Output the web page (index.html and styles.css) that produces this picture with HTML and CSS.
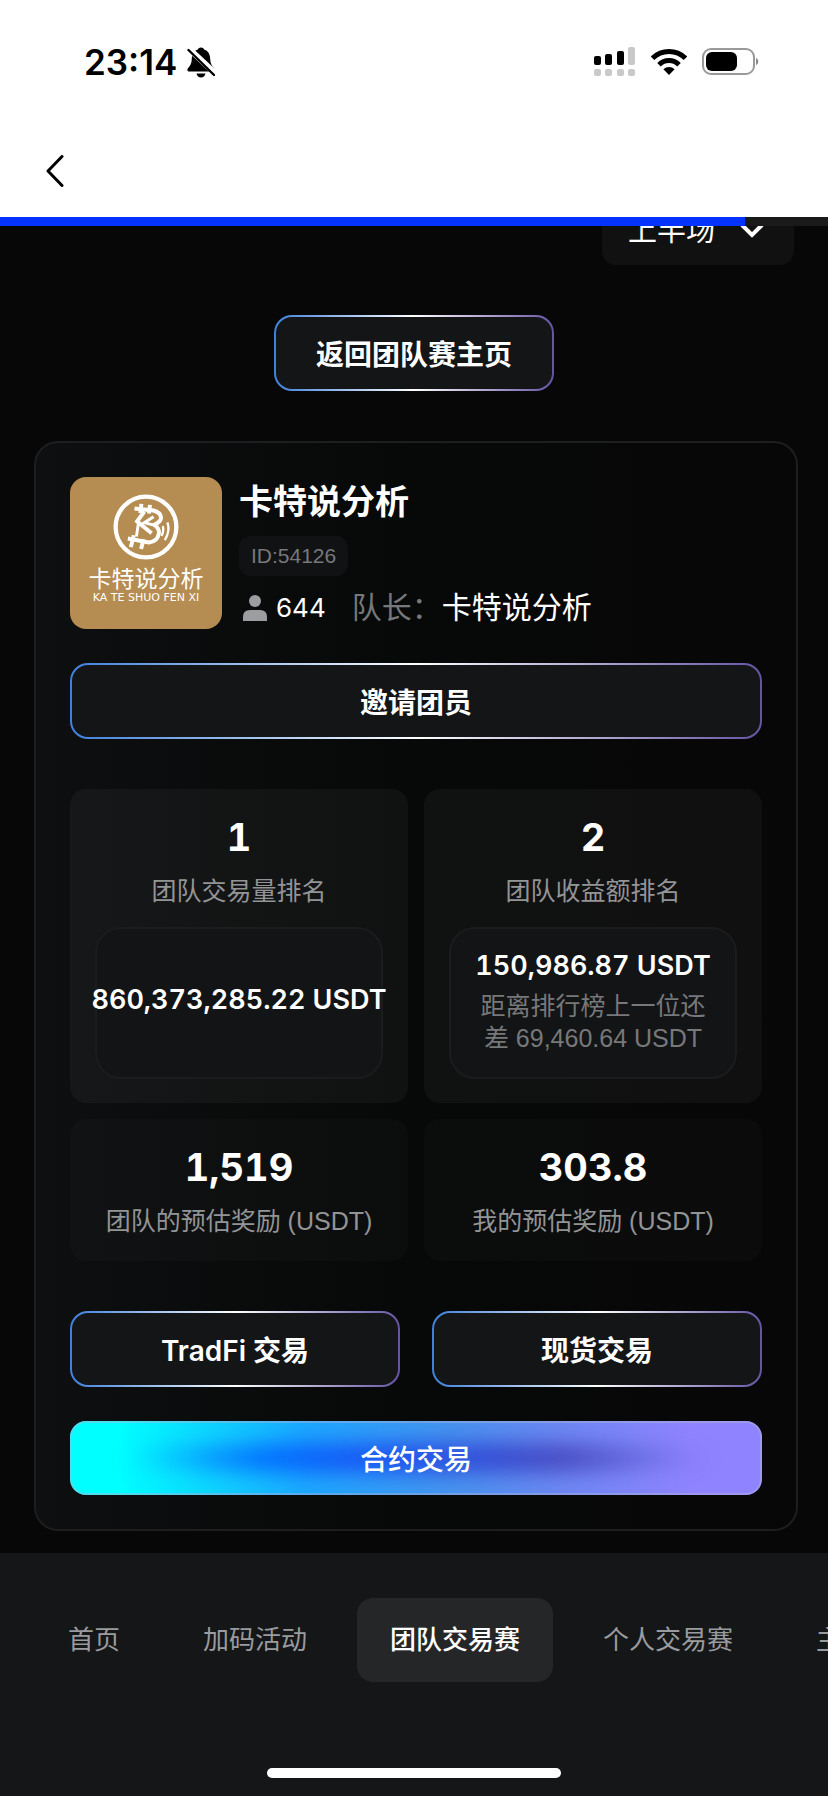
FILE: index.html
```html
<!DOCTYPE html>
<html lang="zh-CN">
<head>
  <meta charset="utf-8">
  <meta name="viewport" content="width=device-width, initial-scale=1">
  <title>团队交易赛</title>
  <link rel="stylesheet" href="styles.css">
</head>
<body>

<header class="top">
  <div class="status">
    <div class="status-left">
      <span class="time">23:14</span>
      <svg width="28" height="31" viewBox="0 0 28 31" aria-hidden="true">
        <path d="M14 0.500c-1.800 0-3 1-3.400 2.300C6.500 4 5 7.500 4.800 12c-.2 4.500-1.500 6.500-3.600 9-1.500 1.900-.9 3.500 1 3.500h23.600c1.900 0 2.500-1.600 1-3.500-2.100-2.500-3.400-4.500-3.600-9C23 7.500 21.500 4 17.400 2.800 17 1.500 15.800.5 14 .5z"/>
        <path d="M9.500 26.500h9c-.6 2.600-2.300 4-4.500 4s-3.900-1.400-4.500-4z"/>
        <path d="M0 0L29 27" stroke="#fff" stroke-width="6"/>
        <path d="M1.500 3L27 28" stroke="#000" stroke-width="2.400" stroke-linecap="round"/>
      </svg>
    </div>
    <div class="status-right">
      <svg width="42" height="30" viewBox="0 0 42 30" aria-hidden="true">
        <rect x="0" y="9" width="7" height="9" rx="2"/>
        <rect x="11" y="7" width="7" height="11" rx="2"/>
        <rect x="23" y="4" width="7" height="14" rx="2"/>
        <g fill="#c9c9c9">
          <rect x="34" y="0" width="7" height="18" rx="2"/>
          <rect x="0" y="22" width="7" height="7" rx="2"/>
          <rect x="11" y="22" width="7" height="7" rx="2"/>
          <rect x="23" y="22" width="7" height="7" rx="2"/>
          <rect x="34" y="22" width="7" height="7" rx="2"/>
        </g>
      </svg>
      <svg width="36" height="28" viewBox="0 0 36 28" aria-hidden="true">
        <g fill="none" stroke="#000" stroke-width="5">
          <path d="M1.500 10.200a23.500 23.500 0 0 1 33 0"/>
          <path d="M8 16.700a14.200 14.200 0 0 1 20 0"/>
        </g>
        <path d="M18 27l-5.600-5.700a8 8 0 0 1 11.200 0z"/>
      </svg>
      <svg width="58" height="28" viewBox="0 0 58 28" aria-hidden="true">
        <rect x="1" y="1" width="51" height="25" rx="8" fill="none" stroke="#9a9a9a" stroke-width="2"/>
        <rect x="4" y="4" width="31" height="19" rx="6"/>
        <path d="M54 10c3 1 3 6 0 7z" fill="#8a8a8a"/>
      </svg>
    </div>
  </div>
  <button class="back" type="button" aria-label="返回">
    <svg width="18" height="32" viewBox="0 0 18 32" aria-hidden="true">
      <path d="M16 1.500L2 16l14 14.500" fill="none" stroke="#000" stroke-width="3" stroke-linecap="round" stroke-linejoin="round"/>
    </svg>
  </button>
  <div class="progress"><div class="progress-bar"></div></div>
</header>

<main class="page">
  <div class="filter">
    <select class="filter-select" aria-label="赛段">
      <option>上半场</option>
      <option>下半场</option>
    </select>
    <svg class="filter-arrow" width="24" height="16" viewBox="0 0 24 16" aria-hidden="true">
      <path d="M2 2l10 10L22 2" fill="none" stroke="#fff" stroke-width="4"/>
    </svg>
  </div>

  <div class="home-link">
    <button class="btn" type="button">返回团队赛主页</button>
  </div>

  <section class="card">
    <div class="team">
      <div class="avatar">
        <svg width="66" height="66" viewBox="13 27 200 200" aria-hidden="true">
          <g fill="none" stroke="#fff" stroke-width="13">
            <circle cx="113" cy="127" r="92"/>
            <g stroke-width="12">
              <path d="M78 71l58 6q25 7 22 25-2 10-20 18 16 12 14 26-4 26-30 28l-64-12"/>
              <path d="M99 57l-3 28M125 60l-3 26M76 152l-9 36M106 164l-8 30"/>
              <path d="M108 80l-22 30 44 36"/>
              <path d="M136 96l-28 18 32 8" stroke-width="9"/>
              <path d="M90 116l-6 40" stroke-width="9"/>
            </g>
            <path d="M164 124q4 14-4 30M178 113q9 26-8 54" stroke-width="7"/>
          </g>
        </svg>
        <span class="avatar-name">卡特说分析</span>
        <span class="avatar-latin">KA TE SHUO FEN XI</span>
      </div>
      <div class="team-info">
        <h1 class="team-name">卡特说分析</h1>
        <span class="team-id">ID:54126</span>
        <div class="team-meta">
          <svg width="24" height="26" viewBox="0 0 24 26" fill="#9c9da1" aria-hidden="true">
            <circle cx="12" cy="6" r="6"/>
            <path d="M0 26v-4q0-7 7-7h10q7 0 7 7v4z"/>
          </svg>
          <span class="count">644</span>
          <span class="leader-label">队长：</span>
          <span>卡特说分析</span>
        </div>
      </div>
    </div>

    <button class="btn btn-invite" type="button">邀请团员</button>

    <div class="stats">
      <div class="stat stat-rank">
        <div class="stat-value">1</div>
        <div class="stat-label">团队交易量排名</div>
        <div class="amount">
          <strong>860,373,285.22 USDT</strong>
        </div>
      </div>
      <div class="stat stat-rank">
        <div class="stat-value">2</div>
        <div class="stat-label">团队收益额排名</div>
        <div class="amount">
          <strong>150,986.87 USDT</strong>
          <p>距离排行榜上一位还<br>差 69,460.64 USDT</p>
        </div>
      </div>
      <div class="stat">
        <div class="stat-value">1,519</div>
        <div class="stat-label">团队的预估奖励 (USDT)</div>
      </div>
      <div class="stat">
        <div class="stat-value">303.8</div>
        <div class="stat-label">我的预估奖励 (USDT)</div>
      </div>
    </div>

    <div class="actions">
      <button class="btn" type="button">TradFi 交易</button>
      <button class="btn" type="button">现货交易</button>
    </div>
    <button class="btn-main" type="button">合约交易</button>
  </section>
</main>

<footer class="bottom">
  <nav class="tabs">
    <a class="tab" href="#home">首页</a>
    <a class="tab" href="#bonus">加码活动</a>
    <a class="tab active" href="#team">团队交易赛</a>
    <a class="tab" href="#solo">个人交易赛</a>
    <a class="tab" href="#main">主</a>
  </nav>
  <div class="home-bar"></div>
</footer>

</body>
</html>
```

FILE: styles.css
```css
* {
  box-sizing: border-box;
}

body {
  margin: 0;
  min-height: 100vh;
  display: flex;
  flex-direction: column;
  overflow-x: hidden;
  background: #070707;
  color: #fff;
  font-family: "Liberation Sans", "Noto Sans CJK SC", sans-serif;
  font-size: 28px;
}

button,
select {
  font: inherit;
  color: inherit;
  cursor: pointer;
}

svg {
  display: block;
  flex: none;
}

/* Status bar and navigation */
.top {
  position: relative;
  z-index: 1;
  background: #fff;
  color: #000;
}

.status {
  display: flex;
  justify-content: space-between;
  align-items: center;
  height: 124px;
  padding: 0 68px 0 84px;
}

.status-left,
.status-right {
  display: flex;
  align-items: center;
}

.status-left {
  gap: 10px;
}

.status-right {
  gap: 15px;
}

.time {
  font-family: Inter, sans-serif;
  font-size: 35px;
  font-weight: 600;
}

.back {
  display: block;
  margin: 24px 0 23px;
  padding: 7px 46px;
  border: 0;
  background: none;
}

.progress {
  height: 9px;
  background: #1a1a1a;
}

.progress-bar {
  width: 90%;
  height: 100%;
  background: #0432ff;
}

/* Page is scrolled a little way under the header */
.page {
  flex: 1;
  margin-top: -29px;
  padding: 0 30px 22px 34px;
}

.filter {
  position: relative;
  width: 192px;
  margin: 0 4px 50px auto;
}

.filter-select {
  display: block;
  width: 100%;
  height: 68px;
  padding: 0 26px;
  border: 0;
  border-radius: 14px;
  appearance: none;
  background: #111;
  font-size: 29px;
}

.filter-arrow {
  position: absolute;
  top: 26px;
  right: 30px;
  pointer-events: none;
}

.btn {
  height: 76px;
  padding: 0 40px;
  border: 2px solid transparent;
  border-radius: 18px;
  background:
    linear-gradient(#131517, #131517) padding-box,
    linear-gradient(90deg, #3f80dc, #fff 50%, #6654a4) border-box;
  font-family: Inter, "Noto Sans CJK SC", sans-serif;
  font-size: 28px;
  font-weight: 600;
}

.home-link {
  display: flex;
  justify-content: center;
  margin-bottom: 50px;
  padding-right: 4px;
}

.card {
  padding: 34px;
  border: 2px solid #1d1e1f;
  border-radius: 24px;
  background: linear-gradient(90deg, #0d0f10, #070808 50%, #070707);
}

.team {
  display: flex;
  gap: 17px;
}

.avatar {
  display: flex;
  flex: none;
  flex-direction: column;
  align-items: center;
  width: 152px;
  height: 152px;
  padding-top: 17px;
  border-radius: 16px;
  background: #b58c51;
}

.avatar-name {
  margin-top: 5px;
  font-size: 23px;
  line-height: 28px;
}

.avatar-latin {
  font-family: "DejaVu Sans", sans-serif;
  font-size: 11px;
  line-height: 10px;
}

.team-name {
  margin: 0 0 9px;
  font-size: 34px;
  font-weight: 600;
  line-height: 50px;
}

.team-id {
  display: block;
  width: fit-content;
  padding: 0 12px;
  border-radius: 12px;
  background: #111213;
  color: #77787b;
  font-size: 21px;
  line-height: 40px;
}

.team-meta {
  display: flex;
  align-items: center;
  margin-top: 12px;
  padding-left: 4px;
  font-size: 30px;
  line-height: 40px;
}

.count {
  margin: 0 26px 0 9px;
  font-family: Inter, sans-serif;
  font-size: 26px;
}

.leader-label {
  color: #77787b;
}

.btn-invite {
  display: block;
  width: 100%;
  margin: 34px 0 50px;
}

.stats {
  display: grid;
  grid-template-columns: repeat(2, minmax(0, 1fr));
  gap: 16px;
}

.stat {
  padding: 24px 25px;
  border-radius: 16px;
  background: rgba(255, 255, 255, 0.02);
  text-align: center;
}

.stat-rank {
  background: rgba(255, 255, 255, 0.04);
}

.stat-value {
  font-family: Inter, sans-serif;
  font-size: 38px;
  font-variant-numeric: tabular-nums;
  font-weight: 700;
  line-height: 48px;
}

.stat-label {
  margin-top: 14px;
  color: #939496;
  font-size: 25px;
  line-height: 32px;
  white-space: nowrap;
}

.amount {
  display: flex;
  flex-direction: column;
  align-items: center;
  justify-content: center;
  gap: 4px;
  height: 152px;
  margin-top: 20px;
  padding-bottom: 6px;
  border: 2px solid #1b1c1e;
  border-radius: 26px;
  background: #131416;
  white-space: nowrap;
}

.amount strong {
  font-family: Inter, sans-serif;
  font-size: 27px;
  font-variant-numeric: tabular-nums;
  font-weight: 600;
  line-height: 40px;
}

.amount p {
  margin: 0;
  color: #77787a;
  font-size: 25px;
  line-height: 32px;
}

.actions {
  display: grid;
  grid-template-columns: 1fr 1fr;
  gap: 32px;
  margin: 50px 0 34px;
}

.btn-main {
  position: relative;
  display: block;
  isolation: isolate;
  overflow: hidden;
  width: 100%;
  height: 74px;
  border: 0;
  border-radius: 16px;
  background: linear-gradient(90deg, #0ff 7%, #1ca8ff 34%, #4694ee 55%, #6b88f2 70%, #9083ff 90%);
  box-shadow: inset 0 0 0 2px rgba(170, 180, 220, 0.45);
  font-size: 28px;
  font-weight: 500;
}

/* Blue glow behind the label */
.btn-main::before {
  content: "";
  position: absolute;
  z-index: -1;
  inset: 23px 7%;
  border-radius: 50%;
  background: linear-gradient(90deg, transparent, #06f 25%, #1c4df0 45%, #44b 75%, transparent);
  filter: blur(11px);
}

/* Bottom tabs */
.bottom {
  padding: 45px 0 18px;
  background: #141618;
}

.tabs {
  display: flex;
  gap: 17px;
  overflow: hidden;
  padding-left: 35px;
}

.tab {
  flex: none;
  padding: 0 33px;
  border-radius: 16px;
  color: #9a9b9e;
  font-size: 26px;
  line-height: 84px;
  text-decoration: none;
}

.tab.active {
  background: #252628;
  color: #fff;
  font-weight: 500;
}

.home-bar {
  width: 294px;
  height: 10px;
  margin: 86px auto 0;
  border-radius: 5px;
  background: #fff;
}
```
